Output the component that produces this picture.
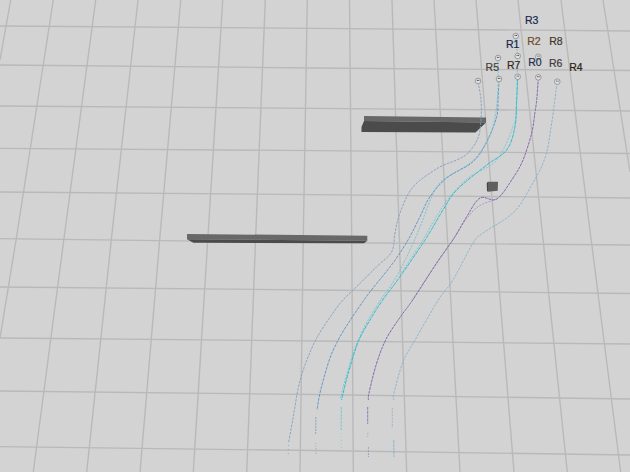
import React from 'react';

type Pt = [number, number];

// floor grid, hand measured from the viewport
const gridRows: Pt[][] = [
  [[0, 26], [315, 28.3], [630, 31]],
  [[0, 65], [315, 68], [630, 70.5]],
  [[0, 106], [315, 108.3], [630, 111]],
  [[0, 148.3], [315, 150.7], [630, 153.5]],
  [[0, 192], [315, 194.7], [630, 198]],
  [[0, 238.7], [315, 242.5], [630, 245]],
  [[0, 287], [315, 290], [630, 293.5]],
  [[0, 338], [315, 341], [630, 344]],
  [[0, 391], [315, 394.5], [630, 399]],
  [[0, 446.7], [315, 450.5], [630, 455]],
];

const gridCols: Pt[][] = [
  [[10.7, 0], [0, 60]],
  [[53.3, 0], [16.7, 236], [0, 338]],
  [[95.7, 0], [64.3, 236], [33.3, 472]],
  [[138, 0], [111.7, 236], [86.7, 472]],
  [[180.7, 0], [160, 236], [140, 472]],
  [[222.7, 0], [208, 236], [193.3, 472]],
  [[265.3, 0], [255.7, 236], [246.7, 472]],
  [[307.3, 0], [303.3, 236], [300, 472]],
  [[349.5, 0], [351.7, 236], [353.3, 472]],
  [[392, 0], [399.3, 236], [406.7, 472]],
  [[434, 0], [447.3, 236], [460, 472]],
  [[476, 0], [495, 236], [514, 472]],
  [[518, 0], [542.7, 236], [567.3, 472]],
  [[561, 0], [590.7, 236], [620.7, 472]],
  [[603, 0], [630, 172]],
];

const c1: Pt[] = [[478, 82], [481, 100], [481, 120], [478, 138], [468, 153], [456.7, 160], [438, 168], [413, 187], [400, 213], [395, 233], [391.7, 251.7], [376.7, 266.7], [358.3, 285], [343, 300], [333, 313], [316.7, 338], [305, 365], [298.3, 388], [293.3, 416.7], [288.5, 443]];
const c2: Pt[] = [[499, 80], [498, 100], [496.7, 116.7], [486.7, 141.7], [473, 161.7], [446.7, 178], [430, 196.7], [420, 216.7], [408, 240], [393, 263], [373, 288], [364, 300], [351.7, 318], [340, 336.7], [330, 358], [320.7, 390], [317, 410]];
const c3: Pt[] = [[517.7, 77], [516.7, 100], [515, 126.7], [506.7, 150], [486.7, 165], [456.7, 190], [443, 210], [425, 240], [400, 276.7], [382.7, 300], [370, 320], [358.3, 341.7], [348.3, 373], [341.5, 400]];
const c3b: Pt[] = [[498, 58], [498, 90], [495, 118], [488, 140], [471.7, 161.7], [443, 180], [431.7, 196.7], [418, 232], [398, 274], [378, 304], [366, 324], [355, 348], [344, 384], [340.5, 398]];
const c3c: Pt[] = [[517.7, 57], [516, 110], [513, 126.7], [496.7, 160], [470, 176.7], [453, 193], [438, 214], [421, 243], [402, 272]];
const c4: Pt[] = [[538.3, 78], [536.7, 100], [535, 112], [531.7, 133], [523, 160], [513, 178], [496.7, 199], [480, 198], [466.7, 216.7], [455, 236.7], [436.7, 263], [412.7, 300], [401.7, 315], [386.7, 338], [376.7, 363], [369, 393], [368.5, 400]];
const c4b: Pt[] = [[496.7, 199], [478, 206.7], [464, 222], [452, 241], [434, 267], [413, 299]];
const c5: Pt[] = [[557, 83], [551.7, 123], [545, 158], [530, 188], [513, 213], [483, 233], [473, 243], [453, 280], [438.3, 300], [415, 340], [403, 361.7], [394, 393], [393.8, 400]];
const c6: Pt[] = [[515.7, 37], [517.7, 57]];

const curves: { pts: Pt[]; color: string; w: number; dash: string }[] = [
  { pts: c1, color: '#7f9ec4', w: 0.9, dash: '2.5 1.2' },
  { pts: c2, color: '#5f90c0', w: 0.9, dash: '3 1' },
  { pts: c3c, color: '#6cc4d0', w: 0.8, dash: '2 1.3' },
  { pts: c3b, color: '#5fc0d0', w: 0.8, dash: '2 1.3' },
  { pts: c3, color: '#35bccd', w: 1, dash: '4 0.8' },
  { pts: c4b, color: '#a08cba', w: 0.8, dash: '2 1.3' },
  { pts: c4, color: '#8569ad', w: 1, dash: '3 0.8' },
  { pts: c5, color: '#7facc8', w: 0.8, dash: '2.5 1.2' },
  { pts: c6, color: '#7fb9c9', w: 0.8, dash: '2 1' },
];

// broken bits at the bottom where the tubes fade out
const tails: { x1: number; y1: number; x2: number; y2: number; color: string; dash?: string }[] = [
  { x1: 288.4, y1: 445, x2: 288.3, y2: 456, color: '#7f9ec4', dash: '1 3' },
  { x1: 315.9, y1: 417, x2: 315.7, y2: 435, color: '#7b94c0', dash: '2 1' },
  { x1: 315.7, y1: 443, x2: 316, y2: 455, color: '#959fc2', dash: '1 1.5' },
  { x1: 341.3, y1: 407, x2: 341.2, y2: 430, color: '#5cc2ce', dash: '2.5 1' },
  { x1: 341.3, y1: 433, x2: 341.4, y2: 452, color: '#84cad0', dash: '1 2.5' },
  { x1: 367.7, y1: 407, x2: 367.7, y2: 424, color: '#7d64a8', dash: '3 0.8' },
  { x1: 367.8, y1: 433, x2: 367.8, y2: 438, color: '#a096bc', dash: '1 1.5' },
  { x1: 368.4, y1: 447, x2: 368.5, y2: 457, color: '#9c90be', dash: '2 1' },
  { x1: 392.3, y1: 408, x2: 392.3, y2: 428, color: '#8fadc6', dash: '2 1.2' },
  { x1: 393.7, y1: 440, x2: 394, y2: 457, color: '#7dabc9', dash: '3 0.8' },
];

const spheres: Pt[] = [[478, 81], [499, 79], [517.7, 76.7], [538.3, 77.3], [557.3, 81.7], [498, 58], [517.7, 56], [538.3, 56.7], [515.7, 36]];

const labels: { text: string; x: number; y: number; color: string }[] = [
  { text: 'R3', x: 531.7, y: 20, color: 'text-[#16264a]' },
  { text: 'R1', x: 512.7, y: 43.5, color: 'text-[#14264e]' },
  { text: 'R2', x: 534, y: 40.7, color: 'text-[#6e4a28]' },
  { text: 'R8', x: 556, y: 40.7, color: 'text-[#40362e]' },
  { text: 'R5', x: 492.3, y: 66.7, color: 'text-[#44403c]' },
  { text: 'R7', x: 513.7, y: 65, color: 'text-[#33261a]' },
  { text: 'R0', x: 535, y: 62.3, color: 'text-[#1c2c50]' },
  { text: 'R6', x: 555.7, y: 63.3, color: 'text-[#3e3c40]' },
  { text: 'R4', x: 576, y: 66.7, color: 'text-[#2a2010]' },
];

// catmull-rom through the measured points
const smooth = (pts: Pt[]) => {
  let d = `M${pts[0][0]} ${pts[0][1]}`;
  for (let i = 0; i < pts.length - 1; i++) {
    const p0 = pts[i - 1] || pts[i];
    const p1 = pts[i];
    const p2 = pts[i + 1];
    const p3 = pts[i + 2] || p2;
    const c1x = p1[0] + (p2[0] - p0[0]) / 6;
    const c1y = p1[1] + (p2[1] - p0[1]) / 6;
    const c2x = p2[0] - (p3[0] - p1[0]) / 6;
    const c2y = p2[1] - (p3[1] - p1[1]) / 6;
    d += ` C${c1x} ${c1y} ${c2x} ${c2y} ${p2[0]} ${p2[1]}`;
  }
  return d;
};

const toPoints = (pts: Pt[]) => pts.map((p) => p.join(',')).join(' ');

const App = () => {
  return (
    <div className="relative h-[472px] w-[630px] overflow-hidden bg-[#d3d3d3] font-['Liberation_Sans',Arial,sans-serif]">
      <svg className="absolute inset-0" width={630} height={472} viewBox="0 0 630 472" fill="none">
        <g className="blur-[0.5px]">
          {gridRows.map((pts, i) => (
            <polyline key={i} points={toPoints(pts)} stroke="#b9b9b9" strokeWidth={1.3} />
          ))}
          {gridCols.map((pts, i) => (
            <polyline key={i} points={toPoints(pts)} stroke="#b9b9b9" strokeWidth={1.4} />
          ))}
        </g>

        <g className="blur-[0.3px]">
          <polygon points="364,116 486,117.5 486,122.5 364,121" fill="#686868" />
          <polygon points="364,121 486,122.5 475.5,132.5 361.5,132 361.5,127" fill="#4b4b4b" />
          <polygon points="187,234 367.3,235.7 367.3,240.7 187,239.3" fill="#686868" />
          <polygon points="187,239.3 367.3,240.7 364,243.3 193.3,242.7" fill="#4b4b4b" />
          <polygon points="488,181.7 498,181.7 497.7,190.7 488,191.7" fill="#5f5f5f" />
          <polygon points="486.7,183 488,181.7 488,191.7 487,191" fill="#474747" />
        </g>

        <g className="blur-[0.2px]">
          {curves.map((c, i) => (
            <path key={i} d={smooth(c.pts)} stroke={c.color} strokeWidth={c.w} strokeDasharray={c.dash} />
          ))}
          {tails.map((t, i) => (
            <line key={i} x1={t.x1} y1={t.y1} x2={t.x2} y2={t.y2} stroke={t.color} strokeWidth={0.8} strokeDasharray={t.dash} />
          ))}
        </g>

        <g className="blur-[0.3px]">
          {spheres.map(([x, y], i) => (
            <g key={i}>
              <circle cx={x} cy={y} r={2.8} fill="#e0e0e0" stroke="#8c8c8c" strokeWidth={0.8} />
              <circle cx={x - 0.6} cy={y - 0.6} r={0.6} fill="#555555" />
              <circle cx={x + 0.8} cy={y - 0.6} r={0.6} fill="#555555" />
            </g>
          ))}
        </g>
      </svg>

      {labels.map((l) => (
        <span
          key={l.text}
          className={`absolute -translate-x-1/2 -translate-y-1/2 text-[10.5px] leading-none [-webkit-text-stroke:0.2px] ${l.color}`}
          style={{ left: l.x, top: l.y }}
        >
          {l.text}
        </span>
      ))}
    </div>
  );
};

export default App;
